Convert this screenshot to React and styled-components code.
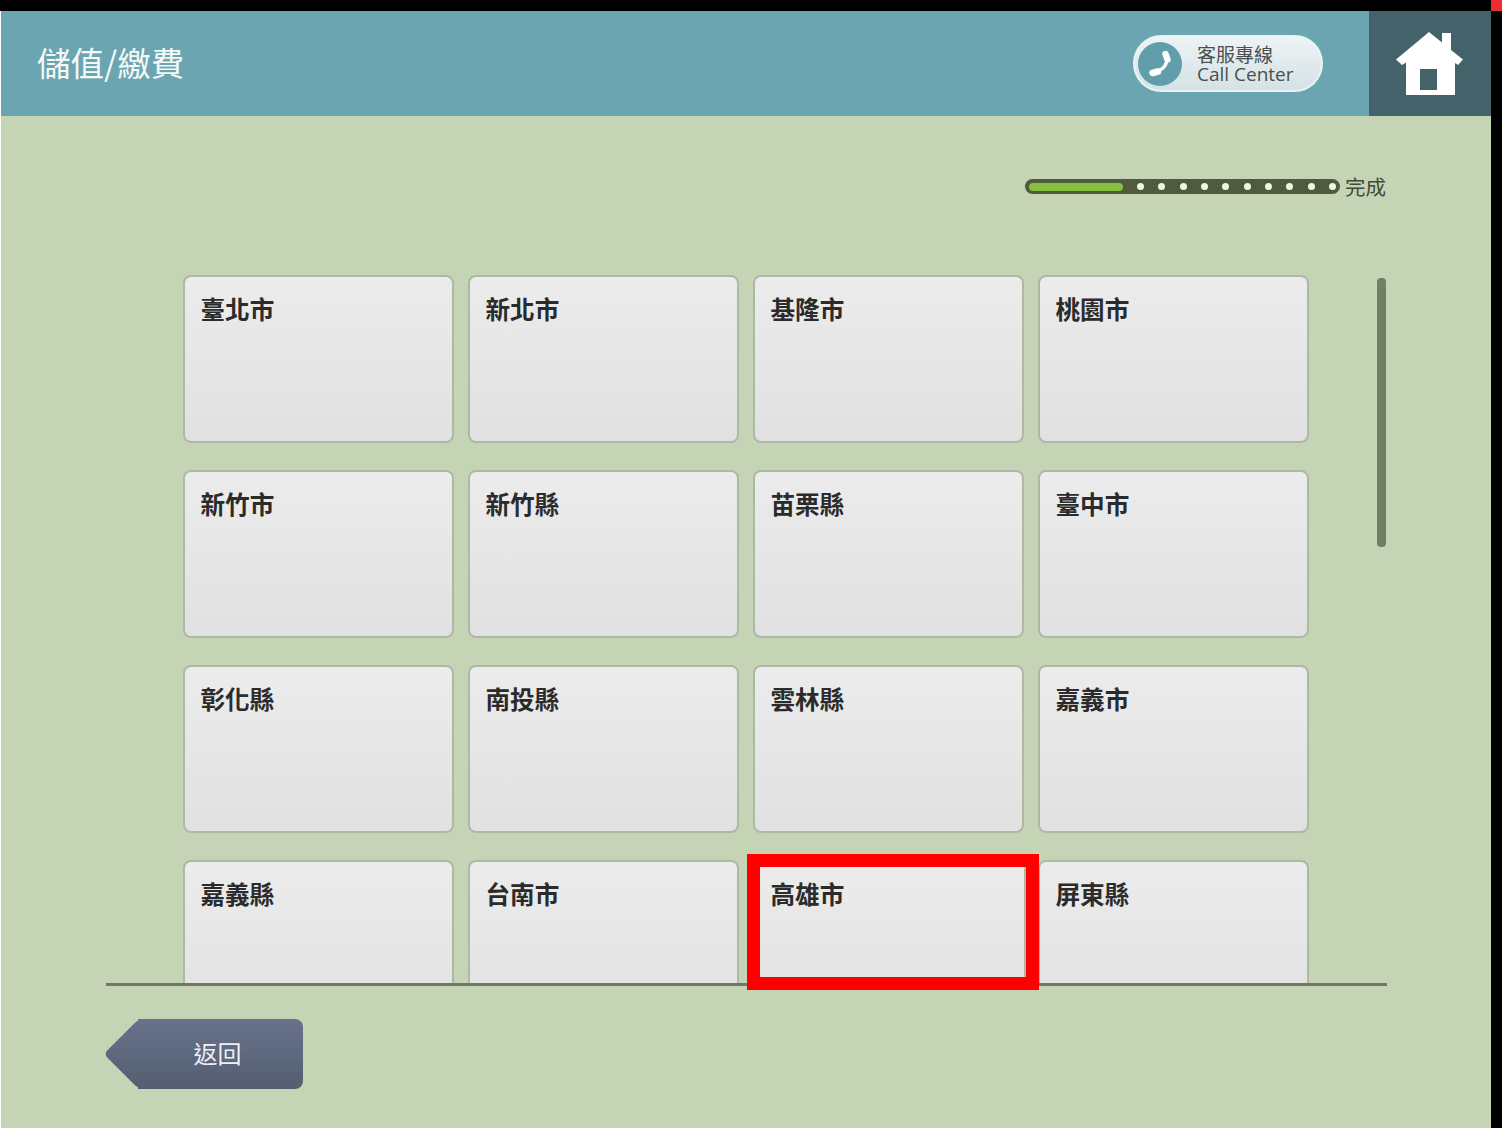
import React from "react";
import styled, { createGlobalStyle } from "styled-components";

const Global = createGlobalStyle`
  html, body { margin: 0; padding: 0; background: #fff; }
  body { font-family: "Noto Sans CJK TC", "Noto Sans", sans-serif; }
  * { box-sizing: border-box; }
`;

const Page = styled.div`
  position: relative;
  width: 1502px;
  height: 1128px;
  display: grid;
  grid-template-columns: 1px 1490px 11px;
  grid-template-rows: 11px 1117px;
  overflow: hidden;
`;
const TopBar = styled.div`
  grid-column: 1 / 3;
  background: #000;
`;
const Corner = styled.div`
  background: #ef2b2d;
`;
const LeftEdge = styled.div`
  background: #fff;
`;
const RightRail = styled.div`
  background: #000;
`;
const Main = styled.main`
  background: #c5d4b4;
  display: flex;
  flex-direction: column;
`;
const Header = styled.header`
  height: 105px;
  background: #6ba5b1;
  display: flex;
  align-items: center;
`;
const Title = styled.h1`
  margin: 0 auto 0 0;
  padding: 0 0 3px 36px;
  font-size: 33.5px;
  font-weight: 400;
  color: #f4f9f8;
  line-height: 1;
`;
const CallPill = styled.div`
  width: 190px;
  height: 57px;
  margin-right: 46px;
  border-radius: 29px;
  background: linear-gradient(180deg, #ecf3f5 0%, #d5e2e5 100%);
  border: 2px solid #e9f3f4;
  display: flex;
  align-items: center;
  gap: 15px;
  padding-left: 3px;
`;
const PhoneDisc = styled.div`
  width: 44px;
  height: 44px;
  border-radius: 50%;
  background: #629dac;
  display: flex;
  align-items: center;
  justify-content: center;
  flex: none;
`;
const CallText = styled.div`
  display: flex;
  flex-direction: column;
  padding-top: 2px;
  color: #4a4f50;
`;
const CallZh = styled.div`
  font-size: 19px;
  line-height: 20px;
`;
const CallEn = styled.div`
  font-family: "Open Sans", "Noto Sans", sans-serif;
  font-size: 19px;
  line-height: 21px;
`;
const HomeBlock = styled.div`
  width: 122px;
  height: 105px;
  background: #44626a;
  display: flex;
  align-items: center;
  justify-content: center;
`;
const ProgressRow = styled.div`
  height: 159px;
  padding: 63px 105px 0 0;
  display: flex;
  justify-content: flex-end;
  align-items: flex-start;
  gap: 5px;
`;
const Track = styled.div`
  width: 315px;
  height: 15px;
  border-radius: 8px;
  background: #4f5b3c;
  display: flex;
  align-items: center;
  padding: 0 4px;
`;
const Fill = styled.div`
  width: 94px;
  height: 8px;
  border-radius: 4px;
  background: #85c040;
  flex: none;
`;
const Dots = styled.div`
  flex: 1;
  display: flex;
  justify-content: space-between;
  padding-left: 14px;
`;
const Dot = styled.span`
  width: 7px;
  height: 7px;
  border-radius: 50%;
  background: #f2f5e6;
`;
const DoneLabel = styled.span`
  font-size: 20.5px;
  line-height: 20px;
  margin-top: -3px;
  color: #3f4a3a;
`;
const ListRow = styled.div`
  height: 708px;
  display: flex;
  padding-left: 182px;
`;
const Viewport = styled.div`
  width: 1126px;
  height: 708px;
  overflow: hidden;
`;
const Grid = styled.div`
  display: grid;
  grid-template-columns: repeat(4, 271px);
  grid-auto-rows: 168px;
  column-gap: 14px;
  row-gap: 27px;
`;
const Card = styled.div`
  width: ${(p) => (p.$extended ? "273px" : "271px")};
  height: 168px;
  padding: 15px 15.5px;
  border: 2px solid #adb9a4;
  border-radius: 8px;
  background: linear-gradient(180deg, #ececec 0%, #e9e9e9 25%, #e1e1e1 100%);
  font-size: 24.6px;
  font-weight: 700;
  line-height: 32px;
  color: #2b2b2b;
`;
const ScrollThumb = styled.div`
  width: 9px;
  height: 269px;
  margin: 3px 0 0 68px;
  border-radius: 4px;
  background: #6f7f68;
`;
const Rule = styled.div`
  height: 3px;
  margin: 0 104px 0 105px;
  background: #6e7a66;
`;
const Footer = styled.div`
  padding: 33px 0 0 104px;
`;
const BackButton = styled.button`
  position: relative;
  margin-left: 33px;
  width: 165px;
  height: 70px;
  border: 0;
  border-radius: 0 8px 8px 0;
  background: linear-gradient(180deg, #68728c 0%, #545e70 100%);
  color: #eef0f6;
  font-family: inherit;
  font-size: 24px;
  line-height: 68px;
  padding: 0 6px 2px 0;
  &::before {
    content: "";
    position: absolute;
    left: -24px;
    top: 10px;
    width: 50px;
    height: 50px;
    border-radius: 5px;
    transform: rotate(45deg);
    background: linear-gradient(135deg, #68728c 0%, #545e70 100%);
  }
`;
const BackLabel = styled.span`
  position: relative;
`;
const Highlight = styled.div`
  position: absolute;
  left: 747px;
  top: 854px;
  width: 292px;
  height: 136px;
  border: 13px solid #ff0000;
  pointer-events: none;
`;

const cities = [
  "臺北市", "新北市", "基隆市", "桃園市",
  "新竹市", "新竹縣", "苗栗縣", "臺中市",
  "彰化縣", "南投縣", "雲林縣", "嘉義市",
  "嘉義縣", "台南市", "高雄市", "屏東縣",
];

const PhoneIcon = () => (
  <svg width="30" height="30" viewBox="0 0 30 30" fill="none" stroke="#fff" strokeLinecap="round">
    <path d="M21 6 Q25 19 8 24" strokeWidth="3.4" />
    <path d="M20.5 5 L22.5 10.5" strokeWidth="6.5" />
    <path d="M7.5 24 L13 22.5" strokeWidth="6.5" />
  </svg>
);

const HomeIcon = () => (
  <svg width="68" height="64" viewBox="0 0 68 64">
    <path
      fill="#fff"
      fillRule="evenodd"
      d="M33 0 L46 10.5 V1 H55 V18 L67 27.5 L62 33 L59 31 V63 H10 V30.5 L6 33 L0 27.5 Z M24 37 V58 H41 V37 Z"
    />
  </svg>
);

export default function App() {
  return (
    <>
      <Global />
      <Page>
        <TopBar />
        <Corner />
        <LeftEdge />
        <Main>
          <Header>
            <Title>儲值/繳費</Title>
            <CallPill>
              <PhoneDisc><PhoneIcon /></PhoneDisc>
              <CallText>
                <CallZh>客服專線</CallZh>
                <CallEn>Call Center</CallEn>
              </CallText>
            </CallPill>
            <HomeBlock><HomeIcon /></HomeBlock>
          </Header>
          <ProgressRow>
            <Track>
              <Fill />
              <Dots>
                {Array.from({ length: 10 }, (_, i) => <Dot key={i} />)}
              </Dots>
            </Track>
            <DoneLabel>完成</DoneLabel>
          </ProgressRow>
          <ListRow>
            <Viewport>
              <Grid>
                {cities.map((c) => <Card key={c} $extended={c === "高雄市"}>{c}</Card>)}
              </Grid>
            </Viewport>
            <ScrollThumb />
          </ListRow>
          <Rule />
          <Footer>
            <BackButton><BackLabel>返回</BackLabel></BackButton>
          </Footer>
        </Main>
        <RightRail />
        <Highlight />
      </Page>
    </>
  );
}
